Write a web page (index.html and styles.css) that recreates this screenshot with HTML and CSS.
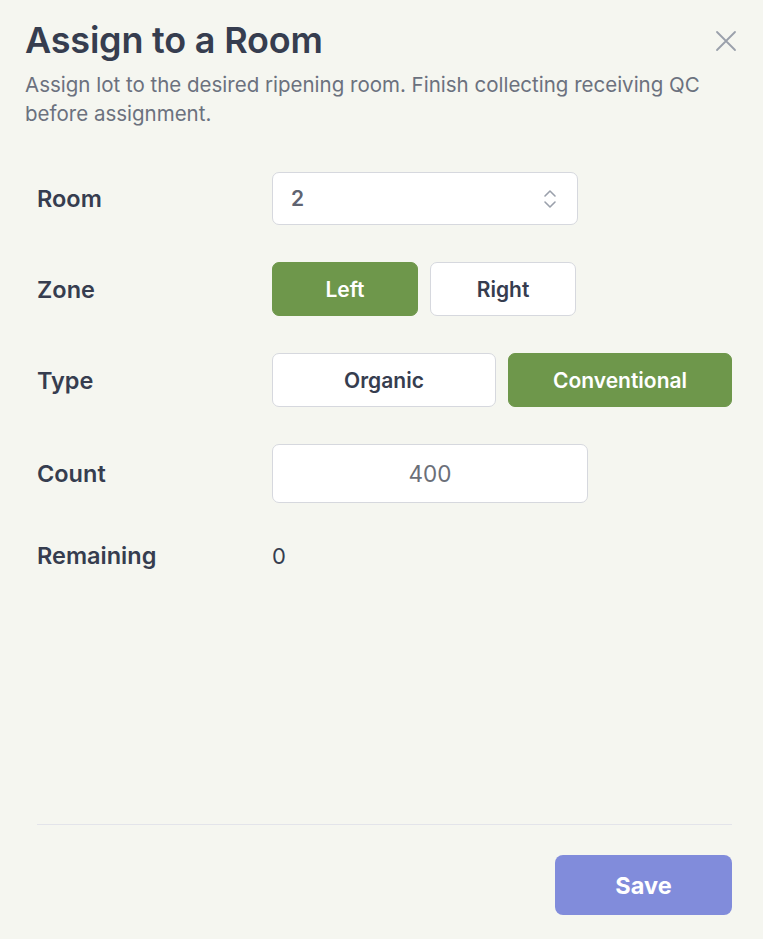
FILE: index.html
```html
<!DOCTYPE html>
<html lang="en">
  <head>
    <meta charset="UTF-8" />
    <title>Assign to a Room</title>
    <link rel="stylesheet" href="styles.css">
  </head>
  <body>
    <div class="dialog">
      <div class="header">
        <div class="header-text">
          <h2>Assign to a Room</h2>
          <p class="sub">Assign lot to the desired ripening room. Finish collecting receiving QC before assignment.</p>
        </div>
        <button class="close" aria-label="Close">
          <svg width="22" height="22" viewBox="0 0 22 22" fill="none" stroke="#9aa0ab" stroke-width="1.8" stroke-linecap="round">
            <path d="M2 2 L20 20 M20 2 L2 20" />
          </svg>
        </button>
      </div>

      <div class="form">
        <div class="label">Room</div>
        <div class="select">
          <span>2</span>
          <svg width="14" height="22" viewBox="0 0 14 22" fill="none" stroke="#9aa0ab" stroke-width="1.6" stroke-linecap="round" stroke-linejoin="round">
            <path d="M2 8 L7 3 L12 8 M2 14 L7 19 L12 14" />
          </svg>
        </div>

        <div class="label">Zone</div>
        <div class="toggles zone">
          <button class="opt on">Left</button>
          <button class="opt">Right</button>
        </div>

        <div class="label">Type</div>
        <div class="toggles type">
          <button class="opt">Organic</button>
          <button class="opt on">Conventional</button>
        </div>

        <div class="label">Count</div>
        <input class="count" type="text" value="400" />

        <div class="label remain-label">Remaining</div>
        <div class="remain">0</div>
      </div>

      <div class="footer">
        <button class="save">Save</button>
      </div>
    </div>
  </body>
</html>
```

FILE: styles.css
```css
body {
  margin: 0;
  background: #f5f6f0;
  font-family: Inter, "Noto Sans", sans-serif;
  color: #363d4f;
}
.dialog {
  height: 939px;
  display: flex;
  flex-direction: column;
}
.header {
  display: flex;
  justify-content: space-between;
  padding: 18px 26px 0 25px;
}
.header h2 {
  margin: 0;
  font-size: 36px;
  line-height: 44px;
  font-weight: 600;
  letter-spacing: -0.2px;
  color: #363d4f;
}
.sub {
  margin: 8px 0 0;
  font-size: 20.5px;
  line-height: 29px;
  color: #6b717e;
  max-width: 700px;
}
.close {
  background: none;
  border: 0;
  padding: 0;
  margin-top: 12px;
  width: 22px;
  height: 22px;
}
.form {
  display: grid;
  grid-template-columns: 235px 1fr;
  row-gap: 37px;
  align-items: center;
  padding: 44px 31px 0 37px;
}
.label {
  font-size: 23.5px;
  font-weight: 600;
}
.select {
  width: 306px;
  height: 53px;
  box-sizing: border-box;
  background: #fff;
  border: 1px solid #d6d8de;
  border-radius: 7px;
  display: flex;
  align-items: center;
  justify-content: space-between;
  padding: 0 20px 0 18px;
  font-size: 21px;
  font-weight: 600;
  color: #5f6471;
}
.toggles {
  display: flex;
  gap: 12px;
}
.opt {
  height: 54px;
  box-sizing: border-box;
  background: #fff;
  border: 1px solid #d6d8de;
  border-radius: 7px;
  font-family: inherit;
  font-size: 21px;
  font-weight: 600;
  color: #363d4f;
}
.opt.on {
  background: #6e974b;
  border-color: #6e974b;
  color: #fff;
}
.zone .opt {
  width: 146px;
}
.type .opt {
  width: 224px;
}
.count {
  width: 316px;
  height: 59px;
  box-sizing: border-box;
  background: #fff;
  border: 1px solid #d6d8de;
  border-radius: 7px;
  text-align: center;
  font-family: inherit;
  font-size: 22.5px;
  color: #6b6f78;
}
.remain-label,
.remain {
  margin-top: 1px;
}
.remain {
  font-size: 22px;
  color: #363d4f;
}
.footer {
  margin: auto 31px 24px 37px;
  border-top: 1px solid #e3e4ea;
  padding-top: 30px;
  display: flex;
  justify-content: flex-end;
}
.save {
  width: 177px;
  height: 60px;
  background: #818cdb;
  border: 0;
  border-radius: 8px;
  color: #fff;
  font-family: inherit;
  font-size: 23.5px;
  font-weight: 700;
}
```
